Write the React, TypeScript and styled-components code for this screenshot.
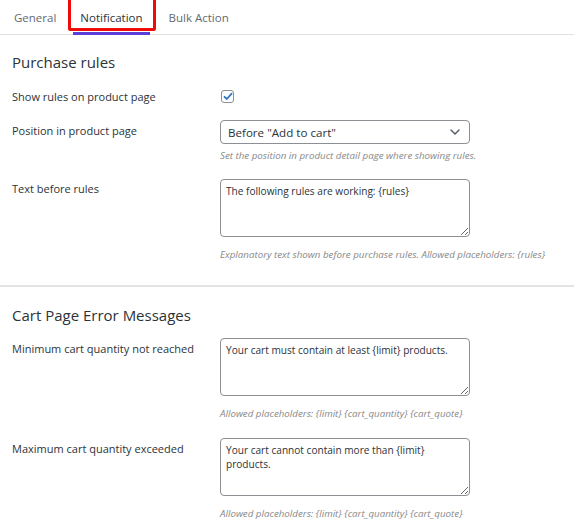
import React from "react";
import styled, { createGlobalStyle } from "styled-components";

const Global = createGlobalStyle`
  html, body { margin: 0; padding: 0; background: #fff; }
  body { font-family: "Open Sans", "Noto Sans", sans-serif; color: #333; }
  * { box-sizing: border-box; }
`;

const Page = styled.div`
  width: 574px;
  height: 530px;
  overflow: hidden;
  background: #fff;
`;

const TabBar = styled.div`
  position: relative;
  display: flex;
  height: 35px;
  border-bottom: 1px solid #e2e2e2;
  padding-left: 2px;
`;

const Tab = styled.div<{ $active?: boolean }>`
  position: relative;
  padding: 0 12px;
  height: 34px;
  display: flex;
  align-items: center;
  font-size: 11.5px;
  font-weight: 500;
  color: ${(p) => (p.$active ? "#2c3338" : "#646970")};
  ${(p) =>
    p.$active &&
    `
    margin: 0 2px 0 0;
    &::after {
      content: "";
      position: absolute;
      left: 5px; right: 5px; bottom: -1px;
      height: 3px;
      background: #5b3fd6;
    }
  `}
`;

const Highlight = styled.div`
  position: absolute;
  left: 68px;
  top: -3px;
  width: 88px;
  height: 34px;
  border: 3px solid #f00b0b;
  border-radius: 2px;
  pointer-events: none;
`;

const Section = styled.section<{ $divider?: boolean }>`
  padding: 0 12px;
  ${(p) => (p.$divider ? "border-bottom: 2px solid #e4e4e4;" : "")}
`;

const Heading = styled.h2<{ $top: number }>`
  margin: ${(p) => p.$top}px 0 0;
  font-size: 15px;
  font-weight: 500;
  color: #2c3338;
  line-height: 20px;
`;

const Row = styled.div<{ $top: number }>`
  display: grid;
  grid-template-columns: 208px 250px;
  margin-top: ${(p) => p.$top}px;
`;

const Label = styled.div<{ $pt?: number }>`
  font-size: 11px;
  font-weight: 500;
  color: #2c3338;
  line-height: 16px;
  padding-top: ${(p) => p.$pt ?? 0}px;
`;

const Field = styled.div`
  display: flex;
  flex-direction: column;
`;

const Check = styled.span`
  display: inline-flex;
  align-items: center;
  justify-content: center;
  width: 13px;
  height: 13px;
  margin-left: 1px;
  margin-top: 1px;
  border: 1px solid #8c8f94;
  border-radius: 3px;
  background: #fff;
`;

const Select = styled.div`
  height: 24px;
  border: 1px solid #8c8f94;
  border-radius: 4px;
  display: flex;
  align-items: center;
  justify-content: space-between;
  padding: 0 9px 0 7px;
  font-size: 11.6px;
  color: #2c3338;
`;

const Text = styled.textarea<{ $h: number }>`
  width: 250px;
  height: ${(p) => p.$h}px;
  border: 1px solid #8c8f94;
  border-radius: 4px;
  padding: 4px 5px;
  font-family: "Open Sans", "Noto Sans", sans-serif;
  font-size: 10.1px;
  line-height: 14px;
  color: #2c3338;
  resize: vertical;
  outline: none;
  margin: 0;
  display: block;
`;

const Desc = styled.p<{ $mt: number }>`
  margin: ${(p) => p.$mt}px 0 0;
  font-size: 9.75px;
  font-style: italic;
  color: #888;
  line-height: 13px;
  white-space: nowrap;
`;

export default function App() {
  return (
    <Page>
      <Global />
      <TabBar>
        <Tab>General</Tab>
        <Tab $active>Notification</Tab>
        <Tab>Bulk Action</Tab>
        <Highlight />
      </TabBar>

      <Section $divider style={{ paddingBottom: 24 }}>
        <Heading $top={17}>Purchase rules</Heading>
        <Row $top={17}>
          <Label>Show rules on product page</Label>
          <Field>
            <Check>
              <svg width="10" height="9" viewBox="0 0 10 9">
                <path d="M1.5 4.8 L3.9 7 L8.6 1.6" fill="none" stroke="#2f78c4" strokeWidth="1.8" strokeLinecap="round" strokeLinejoin="round" />
              </svg>
            </Check>
          </Field>
        </Row>
        <Row $top={15}>
          <Label $pt={3}>Position in product page</Label>
          <Field>
            <Select>
              <span>Before "Add to cart"</span>
              <svg width="10" height="6" viewBox="0 0 10 6">
                <path d="M1 1 L5 5 L9 1" fill="none" stroke="#50575e" strokeWidth="1.4" strokeLinecap="round" strokeLinejoin="round" />
              </svg>
            </Select>
            <Desc $mt={5}>Set the position in product detail page where showing rules.</Desc>
          </Field>
        </Row>
        <Row $top={17}>
          <Label $pt={2}>Text before rules</Label>
          <Field>
            <Text $h={58} readOnly defaultValue="The following rules are working: {rules}" />
            <Desc $mt={11}>Explanatory text shown before purchase rules. Allowed placeholders: {"{rules}"}</Desc>
          </Field>
        </Row>
      </Section>

      <Section>
        <Heading $top={18}>Cart Page Error Messages</Heading>
        <Row $top={13}>
          <Label $pt={3}>Minimum cart quantity not reached</Label>
          <Field>
            <Text $h={58} readOnly defaultValue="Your cart must contain at least {limit} products." />
            <Desc $mt={11}>Allowed placeholders: {"{limit} {cart_quantity} {cart_quote}"}</Desc>
          </Field>
        </Row>
        <Row $top={18}>
          <Label $pt={3}>Maximum cart quantity exceeded</Label>
          <Field>
            <Text $h={58} readOnly defaultValue="Your cart cannot contain more than {limit} products." />
            <Desc $mt={11}>Allowed placeholders: {"{limit} {cart_quantity} {cart_quote}"}</Desc>
          </Field>
        </Row>
      </Section>
    </Page>
  );
}
